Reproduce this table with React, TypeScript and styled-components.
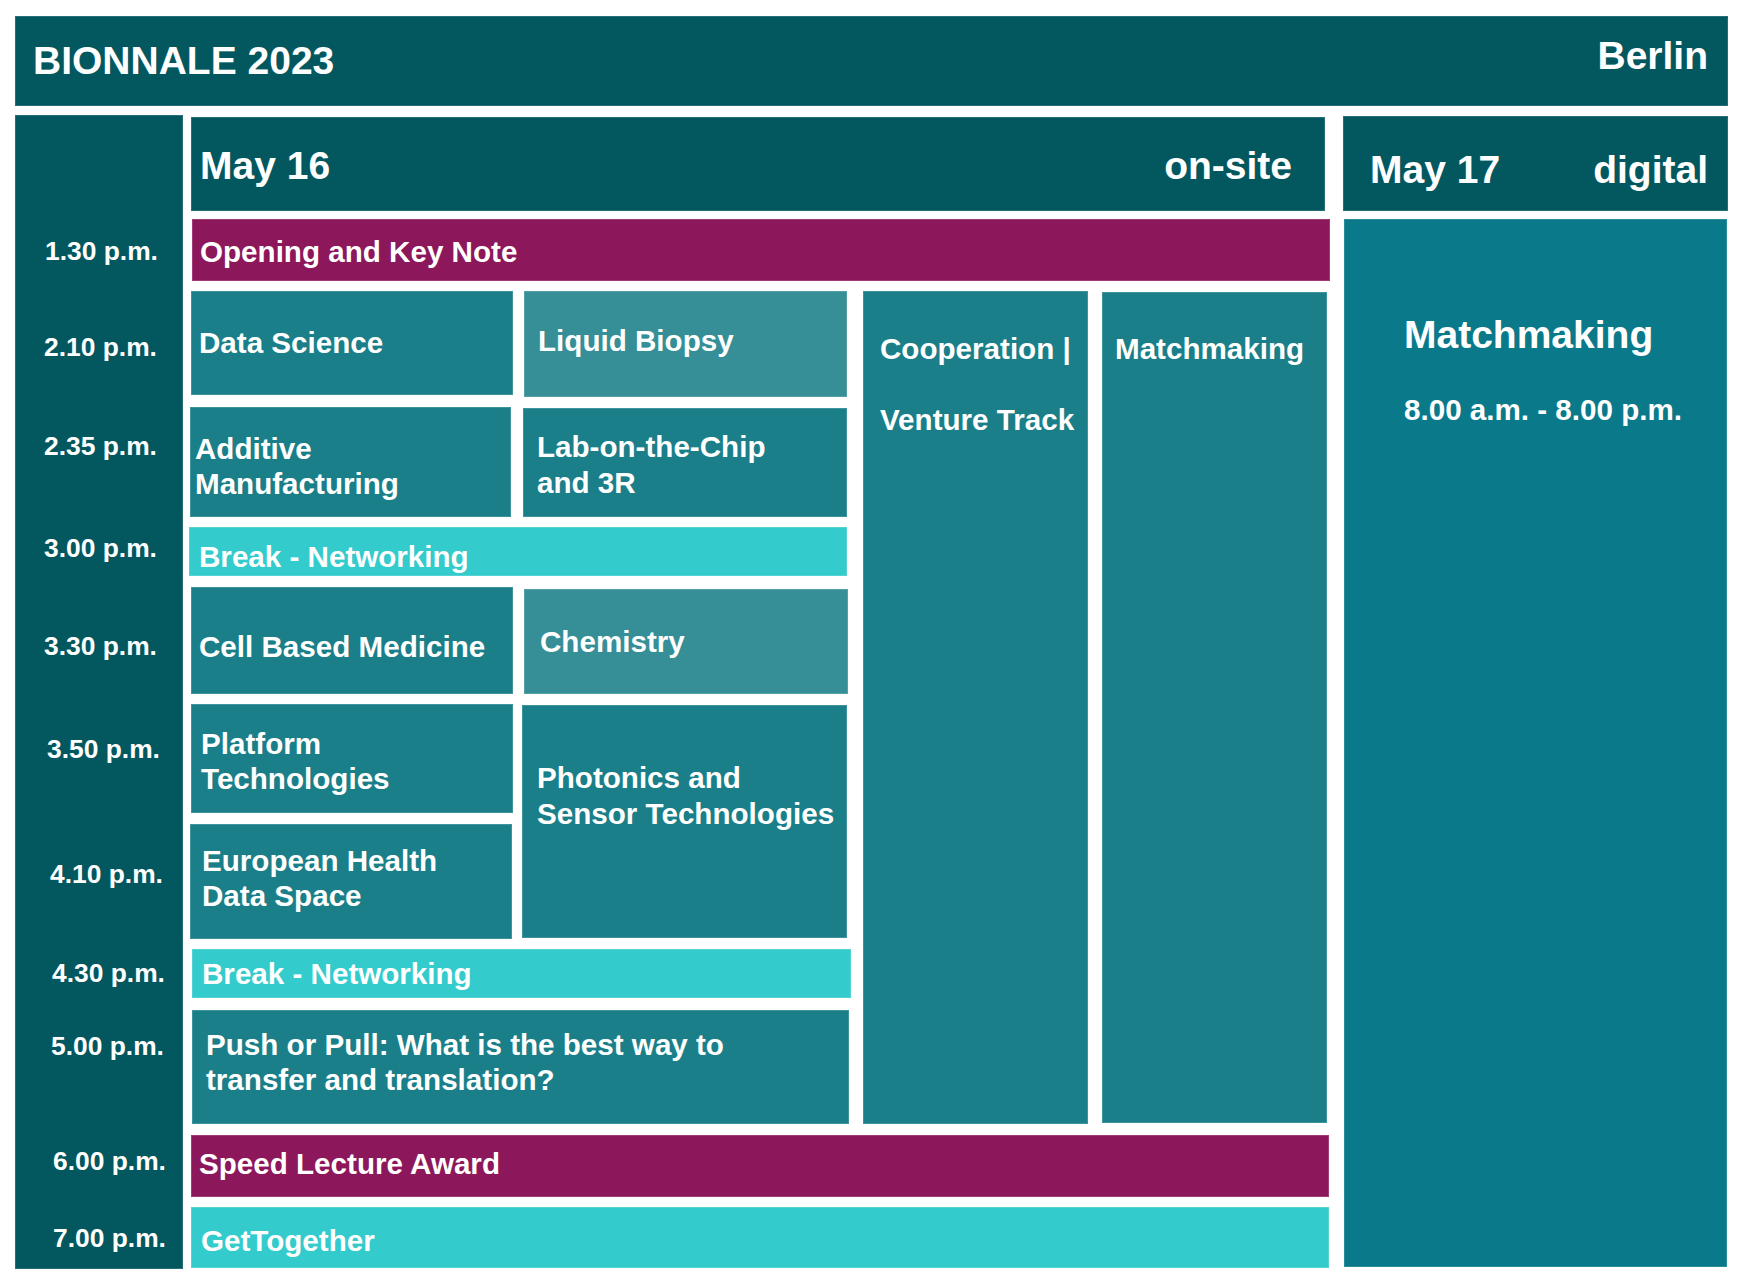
import React from 'react';
import styled, { createGlobalStyle } from 'styled-components';

const GlobalStyle = createGlobalStyle`
  html, body {
    margin: 0;
    padding: 0;
    background: #ffffff;
  }
  body {
    font-family: "Liberation Sans", Arial, Helvetica, sans-serif;
    -webkit-font-smoothing: antialiased;
  }
`;

type Tone = 'deep' | 'teal' | 'soft' | 'cyan' | 'berry' | 'digital';

const tones: Record<Tone, string> = {
  deep: '#03585f',
  teal: '#1b7f89',
  soft: '#368f96',
  cyan: '#33cbcc',
  berry: '#8c175b',
  digital: '#0a7a8a',
};

const Page = styled.div`
  width: 1742px;
  min-height: 1284px;
  box-sizing: border-box;
  padding: 16px 14px 0 15px;
  display: flex;
  flex-direction: column;
  gap: 11px;
  color: #ffffff;
  font-weight: 700;
`;

const TitleBar = styled.header`
  width: 1713px;
  height: 90px;
  box-sizing: border-box;
  padding: 0 20px 0 18px;
  background: ${tones.deep};
  box-shadow: inset 0 0 0 1px rgba(255, 255, 255, 0.14);
  display: flex;
  align-items: center;
  justify-content: space-between;
  font-size: 39px;
  line-height: 46px;
`;

const EventName = styled.h1`
  margin: 0;
  font: inherit;
`;

const City = styled.span`
  margin-bottom: 11px;
`;

const Schedule = styled.div`
  display: grid;
  grid-template-columns: 168px 8px 322px 11px 323px 16px 225px 14px 226px 16px 383px;
  grid-template-rows: 92px 62px 106px 110px 50px 107px 110px 115px 51px 115px 62px 61px;
  row-gap: 10px;
`;

const TimeRail = styled.div`
  grid-area: 1 / 1 / 13 / 2;
  margin: -2px 0 -1px 0;
  background: ${tones.deep};
  box-shadow: inset 0 0 0 1px rgba(255, 255, 255, 0.14);
`;

const TimeLabel = styled.div<{ $row: number; $x: number; $y: number }>`
  grid-column: 1 / 2;
  grid-row: ${(p) => p.$row};
  align-self: start;
  justify-self: start;
  margin-top: ${(p) => p.$y}px;
  margin-left: ${(p) => p.$x}px;
  font-size: 26.4px;
  line-height: 30px;
  white-space: nowrap;
`;

const DayBar = styled.div<{ $area: string; $pad: string; $shift: string }>`
  grid-area: ${(p) => p.$area};
  margin: ${(p) => p.$shift};
  padding: ${(p) => p.$pad};
  box-sizing: border-box;
  background: ${tones.deep};
  box-shadow: inset 0 0 0 1px rgba(255, 255, 255, 0.14);
  display: flex;
  align-items: center;
  justify-content: space-between;
  font-size: 39px;
  line-height: 46px;
  white-space: nowrap;
`;

const Session = styled.div<{
  $area: string;
  $tone: Tone;
  $pad: string;
  $shift?: string;
  $top?: boolean;
}>`
  grid-area: ${(p) => p.$area};
  margin: ${(p) => p.$shift ?? '0'};
  padding: ${(p) => p.$pad};
  box-sizing: border-box;
  min-width: 0;
  background: ${(p) => tones[p.$tone]};
  box-shadow: inset 0 0 0 1px rgba(255, 255, 255, 0.16);
  display: flex;
  flex-direction: column;
  justify-content: ${(p) => (p.$top ? 'flex-start' : 'center')};
  font-size: 29.6px;
  line-height: 35.5px;
  white-space: nowrap;
`;

const DigitalPanel = styled.div`
  grid-area: 2 / 11 / 13 / 12;
  margin: 0 0 1px 0;
  padding: 92px 0 0 60px;
  box-sizing: border-box;
  background: ${tones.digital};
  box-shadow: inset 0 0 0 1px rgba(255, 255, 255, 0.14);
  display: flex;
  flex-direction: column;
  align-items: flex-start;
`;

const DigitalTitle = styled.div`
  font-size: 39px;
  line-height: 47px;
`;

const DigitalHours = styled.div`
  margin-top: 34px;
  font-size: 29.6px;
  line-height: 35.5px;
`;

const times: { label: string; row: number; x: number; y: number }[] = [
  { label: '1.30 p.m.', row: 2, x: 30, y: 17 },
  { label: '2.10 p.m.', row: 3, x: 29, y: 41 },
  { label: '2.35 p.m.', row: 4, x: 29, y: 24 },
  { label: '3.00 p.m.', row: 5, x: 29, y: 6 },
  { label: '3.30 p.m.', row: 6, x: 29, y: 44 },
  { label: '3.50 p.m.', row: 7, x: 32, y: 30 },
  { label: '4.10 p.m.', row: 8, x: 35, y: 35 },
  { label: '4.30 p.m.', row: 9, x: 37, y: 9 },
  { label: '5.00 p.m.', row: 10, x: 36, y: 21 },
  { label: '6.00 p.m.', row: 11, x: 38, y: 11 },
  { label: '7.00 p.m.', row: 12, x: 38, y: 16 },
];

type SessionItem = {
  lines: string[];
  area: string;
  tone: Tone;
  pad: string;
  shift?: string;
  top?: boolean;
};

const sessions: SessionItem[] = [
  { lines: ['Opening and Key Note'], area: '2 / 3 / 3 / 10', tone: 'berry', pad: '4px 0 0 8px', shift: '0 -2px 0 1px' },
  { lines: ['Data Science'], area: '3 / 3 / 4 / 4', tone: 'teal', pad: '0 0 0 8px', shift: '0 0 2px 0' },
  { lines: ['Liquid Biopsy'], area: '3 / 5 / 4 / 6', tone: 'soft', pad: '0 0 6px 14px' },
  { lines: ['Cooperation |', '\u00a0', 'Venture Track'], area: '3 / 7 / 11 / 8', tone: 'teal', pad: '40px 0 0 17px', shift: '0 0 1px 0', top: true },
  { lines: ['Matchmaking'], area: '3 / 9 / 11 / 10', tone: 'teal', pad: '39px 0 0 13px', shift: '1px 1px 2px 0', top: true },
  { lines: ['Additive', 'Manufacturing'], area: '4 / 3 / 5 / 4', tone: 'teal', pad: '8px 0 0 5px', shift: '0 2px 0 -1px' },
  { lines: ['Lab-on-the-Chip', 'and 3R'], area: '4 / 5 / 5 / 6', tone: 'teal', pad: '4px 0 0 14px', shift: '1px 0 0 -1px' },
  { lines: ['Break - Networking'], area: '5 / 3 / 6 / 6', tone: 'cyan', pad: '10px 0 0 10px', shift: '0 0 1px -2px' },
  { lines: ['Cell Based Medicine'], area: '6 / 3 / 7 / 4', tone: 'teal', pad: '12px 0 0 8px' },
  { lines: ['Chemistry'], area: '6 / 5 / 7 / 6', tone: 'soft', pad: '0 0 0 16px', shift: '2px -1px 0 0' },
  { lines: ['Platform', 'Technologies'], area: '7 / 3 / 8 / 4', tone: 'teal', pad: '5px 0 0 10px', shift: '0 0 1px 0' },
  { lines: ['European Health', 'Data Space'], area: '8 / 3 / 9 / 4', tone: 'teal', pad: '0 0 7px 12px', shift: '0 1px 0 -1px' },
  { lines: ['Photonics and', 'Sensor Technologies'], area: '7 / 5 / 9 / 6', tone: 'teal', pad: '55px 0 0 15px', shift: '1px 0 1px -2px', top: true },
  { lines: ['Break - Networking'], area: '9 / 3 / 10 / 6', tone: 'cyan', pad: '0 0 0 10px', shift: '0 -4px 2px 1px' },
  { lines: ['Push or Pull: What is the best way to', 'transfer and translation?'], area: '10 / 3 / 11 / 6', tone: 'teal', pad: '0 0 10px 14px', shift: '0 -2px 1px 1px' },
  { lines: ['Speed Lecture Award'], area: '11 / 3 / 12 / 10', tone: 'berry', pad: '0 0 4px 8px', shift: '0 -1px 0 0' },
  { lines: ['GetTogether'], area: '12 / 3 / 13 / 10', tone: 'cyan', pad: '7px 0 0 10px', shift: '0 -1px 0 0' },
];

export default function App() {
  return (
    <>
      <GlobalStyle />
      <Page>
        <TitleBar>
          <EventName>BIONNALE 2023</EventName>
          <City>Berlin</City>
        </TitleBar>
        <Schedule>
          <TimeRail />
          {times.map((t) => (
            <TimeLabel key={t.label + t.row} $row={t.row} $x={t.x} $y={t.y}>
              {t.label}
            </TimeLabel>
          ))}
          <DayBar $area="1 / 3 / 2 / 10" $pad="3px 33px 0 9px" $shift="0 3px -2px 0">
            <span>May 16</span>
            <span>on-site</span>
          </DayBar>
          <DayBar $area="1 / 11 / 2 / 12" $pad="13px 20px 0 27px" $shift="-1px -1px -2px -1px">
            <span>May 17</span>
            <span>digital</span>
          </DayBar>
          {sessions.map((s, i) => (
            <Session key={i} $area={s.area} $tone={s.tone} $pad={s.pad} $shift={s.shift} $top={s.top}>
              {s.lines.map((line, j) => (
                <span key={j}>{line}</span>
              ))}
            </Session>
          ))}
          <DigitalPanel>
            <DigitalTitle>Matchmaking</DigitalTitle>
            <DigitalHours>8.00 a.m. - 8.00 p.m.</DigitalHours>
          </DigitalPanel>
        </Schedule>
      </Page>
    </>
  );
}
